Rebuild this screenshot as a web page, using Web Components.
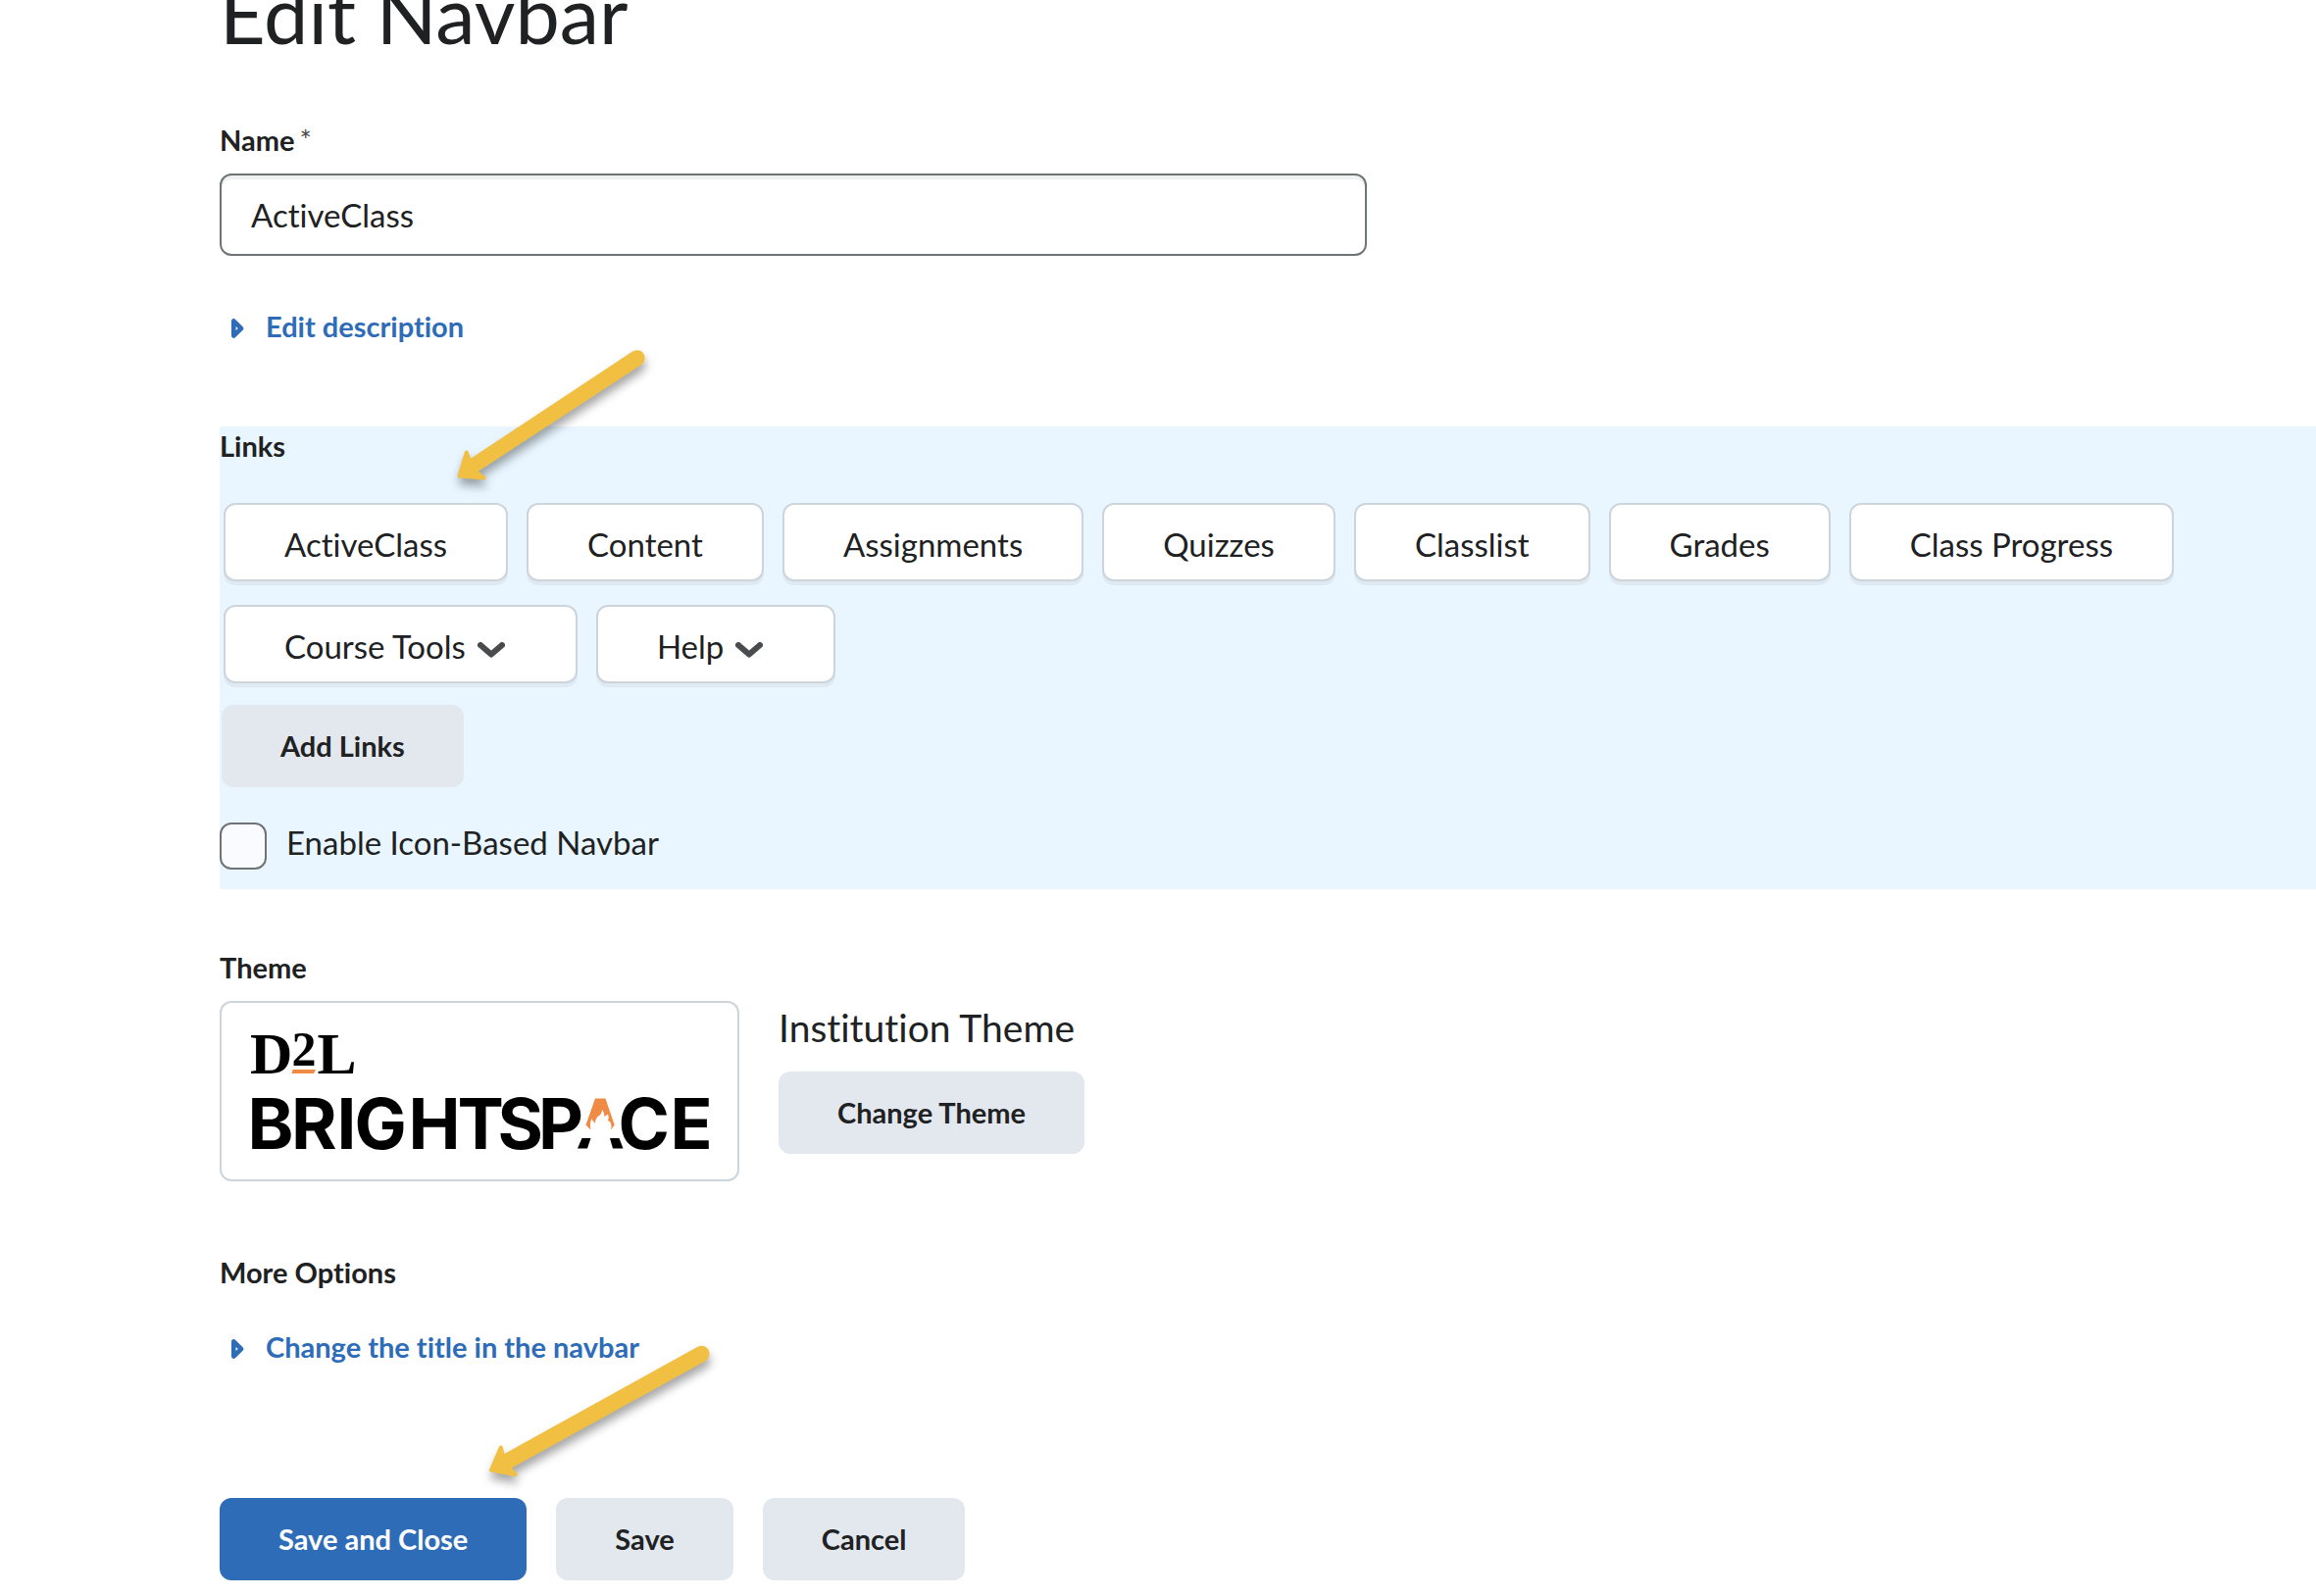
<!DOCTYPE html>
<html lang="en">
<head>
<meta charset="utf-8">
<title>Edit Navbar</title>
<style>
html, body { margin: 0; background: #fff; }
body { font-family: Lato, "Liberation Sans", sans-serif; font-variant-ligatures: none; color: #202122; overflow-x: hidden; }
</style>
</head>
<body>
<navbar-editor></navbar-editor>
<script>
const define = (name, html, setup) => {
  const t = document.createElement('template');
  t.innerHTML = html;
  customElements.define(name, class extends HTMLElement {
    connectedCallback() {
      if (this.shadowRoot) return;
      this.attachShadow({ mode: 'open' }).append(t.content.cloneNode(true));
      if (setup) setup(this, this.shadowRoot);
    }
  });
};

/* Bold heading above each group of settings */
define('field-heading', `
<style>
:host { display: block; }
h2 { margin: 0; font-size: 29px; line-height: 40px; font-weight: 700; }
</style>
<h2><slot></slot></h2>`);

/* Labelled text box */
define('text-field', `
<style>
:host { display: block; }
label { display: flex; gap: 5px; font-size: 29px; line-height: 40px; font-weight: 700; margin-bottom: 14px; }
label span { font-weight: 400; color: #494c4e; }
input { box-sizing: border-box; display: block; width: 100%; max-width: 1170px; height: 84px; padding: 0 30px;
  border: 2px solid #6e7376; border-radius: 12px; background: #fff; box-shadow: inset 0 4px 0 rgba(177,185,190,.2);
  font: 400 33px/40px Lato, "Liberation Sans", sans-serif; font-variant-ligatures: none; color: inherit; outline: none; }
</style>
<label for="box"><slot></slot><span>*</span></label>
<input id="box" type="text" required>`, (el, root) => {
  root.querySelector('input').value = el.getAttribute('value');
});

define('disclosure-link', `
<style>
:host { display: flex; }
a { display: flex; align-items: center; gap: 22px; padding-left: 12px; color: #2e6cb8; text-decoration: none;
  font-size: 29px; line-height: 40px; font-weight: 700; }
svg { display: block; width: 13px; height: 20px; margin-top: 4px; }
</style>
<a href="#"><svg viewBox="0 0 13 20" aria-hidden="true"><path d="M2.300 2.400V17.600L10 10Z" fill="none" stroke="currentColor" stroke-width="4.600" stroke-linejoin="round"/></svg><slot></slot></a>`);

/* One entry of the navbar */
define('nav-tile', `
<style>
:host { display: block; }
button { box-sizing: border-box; display: flex; align-items: center; height: 80px; padding: 4px 60px 0; white-space: nowrap;
  border: 2px solid #cdd5dc; border-radius: 12px; background: #fff; box-shadow: 0 4px 0 #dfe9f1;
  font: 400 33px/40px Lato, "Liberation Sans", sans-serif; font-variant-ligatures: none; color: #202122; }
svg { display: none; width: 28px; height: 16px; margin: 7px 12px 0; }
:host([menu]) svg { display: block; }
</style>
<button type="button"><slot></slot><svg viewBox="0 0 28 16" aria-hidden="true"><path d="M3 3L14 12.6L25 3" fill="none" stroke="#494c4e" stroke-width="6" stroke-linecap="round" stroke-linejoin="round"/></svg></button>`);

define('push-button', `
<style>
:host { display: block; }
button { display: block; height: 84px; padding: 0 60px; border: 0; border-radius: 12px; background: #e3e8ef; color: #202122;
  font: 700 29px/40px Lato, "Liberation Sans", sans-serif; font-variant-ligatures: none; white-space: nowrap; }
:host([primary]) button { background: #2e6cb8; color: #fff; }
</style>
<button type="button"><slot></slot></button>`);

define('tick-box', `
<style>
:host { display: flex; gap: 20px; }
input { appearance: none; box-sizing: border-box; width: 48px; height: 48px; margin: 0; border: 2px solid #6e7376;
  border-radius: 12px; background: #fafbff; }
label { font-size: 33px; line-height: 40px; }
</style>
<input id="tick" type="checkbox"><label for="tick"><slot></slot></label>`);

/* Framed preview of the theme's logo */
define('theme-logo', `
<style>
:host { box-sizing: border-box; display: block; width: 530px; height: 184px; border: 2px solid #cdd5dc; border-radius: 12px; }
svg { display: block; width: 526px; height: 180px; }
.d2l { font-family: "Liberation Serif", serif; font-weight: 700; }
.word { font: 700 71px Inter, sans-serif; }
</style>
<svg viewBox="226 1023 526 180" role="img" aria-label="D2L Brightspace">
  <text class="d2l" font-size="60" x="255 297.500 323.500" y="1094.500">D<tspan font-size="50" y="1087">2</tspan><tspan y="1094.500">L</tspan></text>
  <path d="M298.500 1091H322L320 1095H297.500Z" fill="#f08b45"/>
  <text class="word" x="252.500 297 343.500 361.500 416.500 466.500 507.500 549" y="1171.500">BRIGHTSP</text>
  <text class="word" x="630.500 683.500" y="1171.500">CE</text>
  <path d="M607 1120.500H617.500L626.700 1147.500L623 1152.500Q625 1145 620 1143Q621.500 1140 620 1136.500L616.500 1139Q616 1134 614 1132Q614 1137 609.500 1139Q606.500 1143 607 1146Q604 1143 603.500 1141Q601 1146 602.500 1152.500L597.500 1147.500Z" fill="#f08b45"/>
  <path d="M593.500 1161H602.500L599 1171.500H589ZM622 1161H631.500L635.500 1171.500H625Z"/>
</svg>`);

/* Callout arrows lying over the form */
define('callout-arrows', `
<style>
:host { position: absolute; inset: 0; pointer-events: none; }
svg { display: block; width: 100%; height: 100%; overflow: visible; }
path { fill: #f1bf42; stroke: #f1bf42; stroke-width: 4; stroke-linejoin: round; filter: drop-shadow(1px 7px 5px rgba(0,0,0,.35)); }
</style>
<svg aria-hidden="true">
  <path d="M468.500 485.500L475.700 461.500L479.500 470.500L646.500 360C653 356.500 659 364.500 653.500 370L484.500 480.500L493.500 487.500Z"/>
  <path d="M501 1499.500L510.800 1476.500L513 1486L713 1375.300C720 1372.500 725 1381.500 718.500 1386.500L518.500 1497L525.500 1504Z"/>
</svg>`);

define('navbar-editor', `
<style>
:host { display: flow-root; position: relative; padding: 0 0 16px 224px; }
h1 { margin: -34px 0 61px; font-size: 81px; line-height: 96px; font-weight: 400; }
disclosure-link { margin-top: 52px; }
.links { margin-top: 82px; padding-bottom: 20px; background: #e9f6ff; }
.tiles { display: flex; flex-wrap: wrap; gap: 24px 19px; margin: 38px 4px 22px; }
.add { display: flex; margin: 0 2px 36px; }
.theme { display: flex; gap: 40px; margin: 14px 0 73px; }
.name { margin: 0 0 18px; font-size: 39px; line-height: 54px; }
.theme-side { display: flex; flex-direction: column; align-items: flex-start; }
.links + field-heading { margin-top: 60px; }
.more { margin-top: 36px; }
.actions { display: flex; gap: 30px; margin-top: 134px; }
</style>
<h1>Edit Navbar</h1>
<text-field value="ActiveClass">Name</text-field>
<disclosure-link>Edit description</disclosure-link>
<section class="links">
  <field-heading>Links</field-heading>
  <div class="tiles">
    <nav-tile>ActiveClass</nav-tile><nav-tile>Content</nav-tile><nav-tile>Assignments</nav-tile><nav-tile>Quizzes</nav-tile>
    <nav-tile>Classlist</nav-tile><nav-tile>Grades</nav-tile><nav-tile>Class Progress</nav-tile>
    <nav-tile menu>Course Tools</nav-tile><nav-tile menu>Help</nav-tile>
  </div>
  <div class="add"><push-button>Add Links</push-button></div>
  <tick-box>Enable Icon-Based Navbar</tick-box>
</section>
<field-heading>Theme</field-heading>
<div class="theme">
  <theme-logo></theme-logo>
  <div class="theme-side">
    <p class="name">Institution Theme</p>
    <push-button>Change Theme</push-button>
  </div>
</div>
<field-heading>More Options</field-heading>
<disclosure-link class="more">Change the title in the navbar</disclosure-link>
<div class="actions">
  <push-button primary>Save and Close</push-button>
  <push-button>Save</push-button>
  <push-button>Cancel</push-button>
</div>
<callout-arrows></callout-arrows>`);
</script>
</body>
</html>
